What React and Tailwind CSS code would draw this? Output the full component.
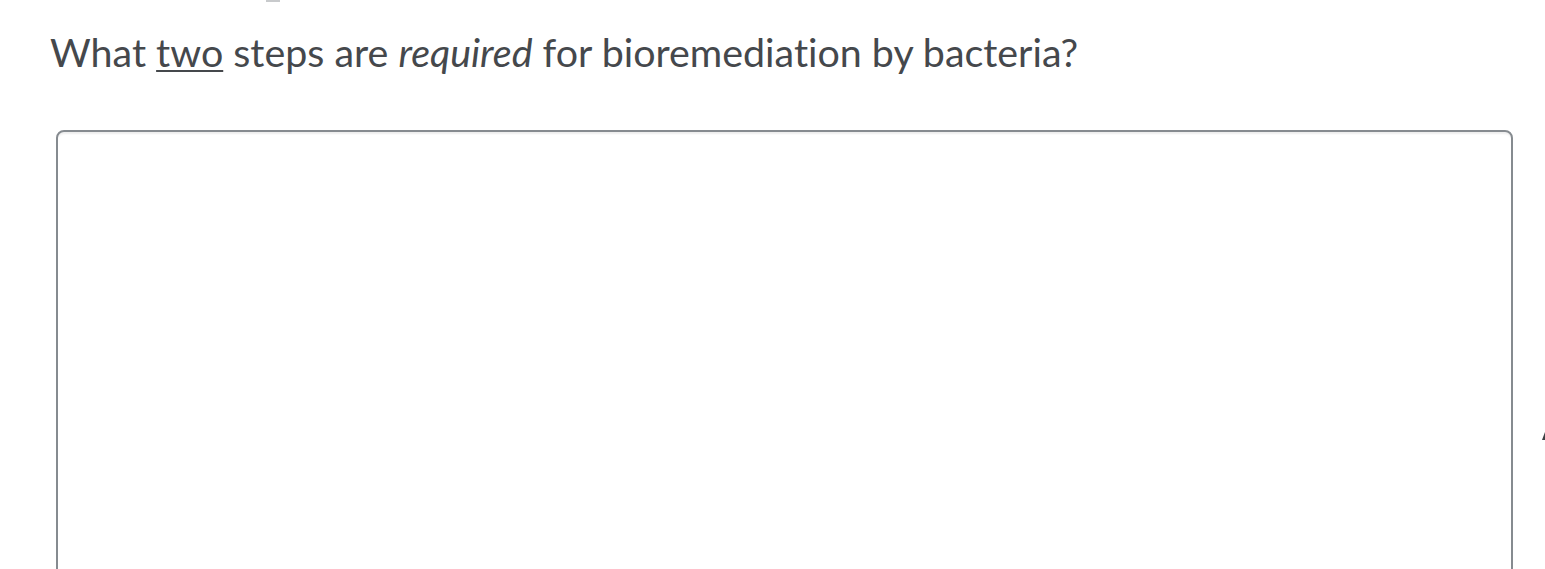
import React from 'react'

const App = () => {
  return (
    <div className="relative min-h-[569px] w-full overflow-hidden bg-white" style={{ fontFamily: 'Lato, "Open Sans", sans-serif' }}>
      {/* bit of previous content peeking in at the top */}
      <div className="absolute left-[266px] top-0 h-[2px] w-[14px] bg-[#c8cacc]" />

      <div className="pl-[50px] pt-[27px]">
        <p className="text-[39.4px] leading-[50px] text-[#45484c] [font-variant-ligatures:none]">
          What <span className="underline decoration-[2px] underline-offset-[3px]">two</span> steps are{' '}
          <em className="italic">required</em> for bioremediation by bacteria?
        </p>
      </div>

      <div className="pl-[56px] pr-[32px] pt-[53px]">
        <textarea
          className="block h-[480px] w-full resize-none rounded-[8px] border-2 border-[#868b90] bg-white shadow-[inset_0_3px_2px_-1px_rgba(0,0,0,0.07)] outline-none"
        />
      </div>

      {/* edge of a sidebar arrow on the right */}
      <div className="absolute right-0 top-[432px] h-[8px] w-[3px] bg-[#3d4043] [clip-path:polygon(100%_0,100%_100%,0_100%)]" />
    </div>
  )
}

export default App
